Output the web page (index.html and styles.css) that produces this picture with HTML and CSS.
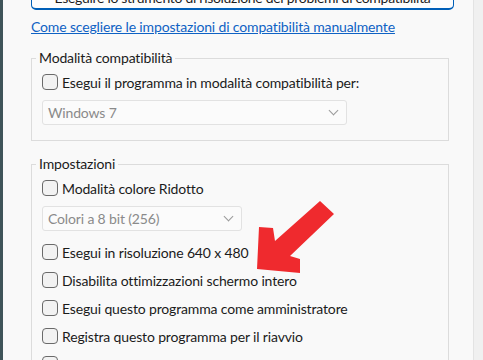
FILE: index.html
```html
<!DOCTYPE html>
<html lang="it">
<head>
  <meta charset="UTF-8" />
  <title>Compatibilità</title>
  <link rel="stylesheet" href="styles.css">
</head>
<body>
  <div class="window">
    <div class="page">
      <button class="troubleshoot">Eseguire lo strumento di risoluzione dei problemi di compatibilità</button>
      <a class="link" href="#">Come scegliere le impostazioni di compatibilità manualmente</a>

      <fieldset class="group">
        <legend>Modalità compatibilità</legend>
        <label class="row"><span class="box dark"></span>Esegui il programma in modalità compatibilità per:</label>
        <div class="select wide">Windows 7<span class="chev"></span></div>
      </fieldset>

      <fieldset class="group second">
        <legend>Impostazioni</legend>
        <label class="row"><span class="box"></span>Modalità colore Ridotto</label>
        <div class="select narrow">Colori a 8 bit (256)<span class="chev"></span></div>
        <label class="row gap"><span class="box"></span>Esegui in risoluzione 640 x 480</label>
        <label class="row"><span class="box"></span>Disabilita ottimizzazioni schermo intero</label>
        <label class="row"><span class="box"></span>Esegui questo programma come amministratore</label>
        <label class="row"><span class="box"></span>Registra questo programma per il riavvio</label>
        <label class="row"><span class="box"></span>Usa la gestione colori ICC legacy dello schermo</label>
      </fieldset>
    </div>
    <div class="scroll"></div>
  </div>

  <svg class="arrow" width="483" height="360" viewBox="0 0 483 360">
    <polygon points="320,201 334,214 290,256 300,259 300,273 257,269 259,227 273,228 275,241" fill="#ef2a2e" />
  </svg>
</body>
</html>
```

FILE: styles.css
```css
html, body {
  margin: 0;
  height: 100%;
  overflow: hidden;
}
body {
  background: #f9f9f9;
  color: #1b1b1b;
  font-family: Lato, sans-serif;
  font-size: 14px;
  letter-spacing: -0.15px;
  border-left: 3px solid #3f5459;
  box-sizing: border-box;
}
.window {
  display: flex;
  height: 100%;
}
.page {
  flex: 1;
  padding-left: 28px;
}
.scroll {
  width: 9px;
  background: #f0f0f0;
  border-left: 1px solid #e3e3e3;
}
.troubleshoot {
  display: block;
  width: 423px;
  height: 28px;
  margin-top: -18px;
  padding: 3px 0 0;
  background: #fdfdfd;
  border: 1px solid #005fb8;
  border-bottom-width: 2px;
  border-radius: 5px;
  font: inherit;
  letter-spacing: -0.3px;
  color: #1b1b1b;
  white-space: nowrap;
  overflow: hidden;
}
.link {
  display: block;
  margin-top: 8px;
  line-height: 18px;
  color: #0f62c4;
}
.group {
  width: 396px;
  margin: 14px 0 0;
  padding: 2px 10px 15px;
  border: 1px solid #dcdcdc;
}
.group.second {
  margin-top: 15px;
  padding-bottom: 0;
  border-bottom: none;
}
.group legend {
  margin-left: -6px;
  padding: 0 3px;
  line-height: 16px;
}
.row {
  display: flex;
  align-items: center;
  height: 28px;
  white-space: nowrap;
}
.row.gap {
  margin-top: 7px;
}
.box {
  width: 14px;
  height: 14px;
  margin-right: 4px;
  border: 1px solid #6a6a6a;
  border-radius: 4px;
  background: #f2f2f2;
}
.select {
  display: flex;
  align-items: center;
  justify-content: space-between;
  box-sizing: border-box;
  height: 25px;
  margin-top: 4px;
  padding: 0 9px 0 5px;
  border: 1px solid #e2e2e2;
  border-radius: 3px;
  background: #fbfbfb;
  color: #8a8a8a;
}
.select.wide {
  width: 305px;
}
.select.narrow {
  width: 200px;
}
.chev {
  width: 6px;
  height: 6px;
  margin-top: -4px;
  border-right: 1px solid #9a9a9a;
  border-bottom: 1px solid #9a9a9a;
  transform: rotate(45deg);
}
.arrow {
  position: absolute;
  left: 0;
  top: 0;
}
```
